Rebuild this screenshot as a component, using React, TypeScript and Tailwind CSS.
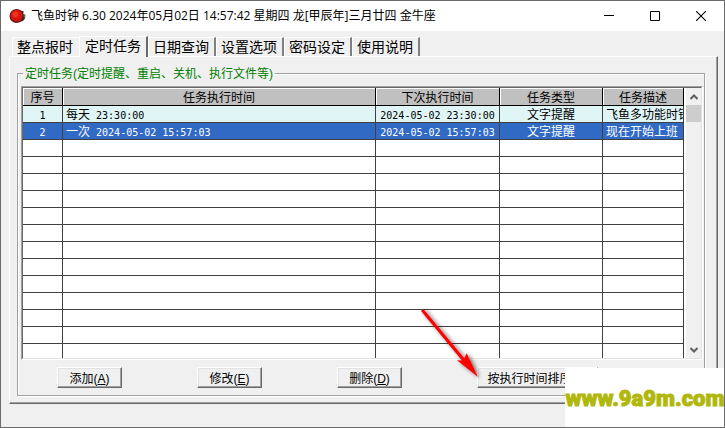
import { useState } from 'react';

const tabs = ['整点报时', '定时任务', '日期查询', '设置选项', '密码设定', '使用说明'];

const tasks = [
  { id: 1, repeat: '每天', time: '23:30:00', next: '2024-05-02 23:30:00', type: '文字提醒', desc: '飞鱼多功能时钟' },
  { id: 2, repeat: '一次', time: '2024-05-02 15:57:03', next: '2024-05-02 15:57:03', type: '文字提醒', desc: '现在开始上班' },
];

const emptyRows = Array.from({ length: 13 }, (_, i) => i);

const actions = [
  { label: '添加', hotkey: 'A' },
  { label: '修改', hotkey: 'E' },
  { label: '删除', hotkey: 'D' },
];

const raised =
  'h-[21px] shrink-0 border border-t-white border-l-white border-r-[#696969] border-b-[#696969] bg-[#f0f0f0] text-xs leading-4 whitespace-nowrap shadow-[inset_-1px_-1px_0_#a0a0a0,inset_1px_1px_0_#e3e3e3]';

const headCell =
  'h-[18px] border-r border-b border-black bg-[#c0c0c0] p-0 text-center text-xs leading-4 font-normal shadow-[inset_1px_1px_0_#fff]';

const cell = 'h-[17px] overflow-hidden border-r border-b border-[#404040] p-0 leading-4 whitespace-nowrap';

const Mono = ({ children }: { children: React.ReactNode }) => (
  <span className="font-['DejaVu_Sans_Mono',monospace] text-[10px] leading-none">{children}</span>
);

const Latin = ({ children }: { children: React.ReactNode }) => (
  <span className="font-['Liberation_Sans',sans-serif] leading-none">{children}</span>
);

const TitleBar = () => (
  <header className="flex h-[30px] shrink-0 items-center bg-white pl-2">
    <svg className="h-4 w-[17px] shrink-0" viewBox="0 0 17 16" aria-hidden="true">
      <path d="M10 2 L15 3.5 L14 5.5 L16.5 7 L16 10.5 L14 13 L10 14Z" fill="#2e3a2c" />
      <path d="M14.5 6L16 8L15 10Z" fill="#8a9480" />
      <circle cx="7.5" cy="8" r="7" fill="#6a1a14" />
      <circle cx="7.5" cy="7.7" r="5.9" fill="#d8160f" />
      <circle cx="6.4" cy="6.4" r="2.8" fill="#f2301f" />
    </svg>
    <h1 className="ml-[5px] flex-1 truncate font-['Open_Sans','Noto_Sans_CJK_SC',sans-serif] text-xs">
      飞鱼时钟 6.30 2024年05月02日 14:57:42 星期四 龙[甲辰年]三月廿四 金牛座
    </h1>
    <div className="flex h-full shrink-0">
      <button aria-label="最小化" className="flex w-[46px] items-center justify-center">
        <svg width="10" height="10" viewBox="0 0 10 10"><path d="M0 4.5H10" stroke="#000" /></svg>
      </button>
      <button aria-label="最大化" className="flex w-[46px] items-center justify-center">
        <svg width="10" height="10" viewBox="0 0 10 10"><path d="M.5 .5H9.5V9.5H.5Z" fill="none" stroke="#000" /></svg>
      </button>
      <button aria-label="关闭" className="flex w-[46px] items-center justify-center">
        <svg width="10" height="10" viewBox="0 0 10 10"><path d="M0 0L10 10M10 0L0 10" stroke="#000" strokeWidth="1.1" /></svg>
      </button>
    </div>
  </header>
);

const ScrollBar = () => (
  <div className="flex w-[17px] shrink-0 flex-col border-l-2 border-white bg-[#f0f0f0]">
    <button aria-label="向上滚动" className="flex h-[17px] items-center justify-center">
      <svg width="8" height="6" viewBox="0 0 8 6"><path d="M.5 5L4 1.5L7.5 5" fill="none" stroke="#606060" strokeWidth="2" /></svg>
    </button>
    <div className="h-[17px] bg-[#cdcdcd]" />
    <button aria-label="向下滚动" className="mt-auto flex h-[17px] items-center justify-center">
      <svg width="8" height="6" viewBox="0 0 8 6"><path d="M.5 1L4 4.5L7.5 1" fill="none" stroke="#606060" strokeWidth="2" /></svg>
    </button>
  </div>
);

const TaskTable = ({ selected, onSelect }: { selected: number; onSelect: (id: number) => void }) => (
  <div className="mr-px ml-[3px] flex min-h-0 flex-1 border border-t-[#a0a0a0] border-l-[#a0a0a0] border-r-white border-b-white">
    <div className="flex min-w-0 flex-1 border border-t-[#696969] border-l-[#696969] border-r-[#e3e3e3] border-b-[#e3e3e3] bg-white">
      <div className="min-w-0 flex-1 overflow-hidden">
        <table className="w-full table-fixed border-separate border-spacing-0 text-xs leading-4">
          <colgroup>
            <col className="w-10" />
            <col />
            <col className="w-[124px]" />
            <col className="w-[103px]" />
            <col className="w-[81px]" />
          </colgroup>
          <thead>
            <tr>
              <th className={headCell}>序号</th>
              <th className={headCell}>任务执行时间</th>
              <th className={headCell}>下次执行时间</th>
              <th className={headCell}>任务类型</th>
              <th className={headCell}>任务描述</th>
            </tr>
          </thead>
          <tbody>
            {tasks.map((task) => (
              <tr
                key={task.id}
                onClick={() => onSelect(task.id)}
                className={task.id === selected ? 'bg-[#316ac5] text-white' : 'bg-[#e0f6f6]'}
              >
                <td className={`${cell} text-center`}><Mono>{task.id}</Mono></td>
                <td className={`${cell} pl-[3px]`}>{task.repeat}<Mono> {task.time}</Mono></td>
                <td className={`${cell} text-center`}><Mono>{task.next}</Mono></td>
                <td className={`${cell} text-center`}>{task.type}</td>
                <td className={`${cell} pl-[3px]`}>{task.desc}</td>
              </tr>
            ))}
            {emptyRows.map((row) => (
              <tr key={row}>
                <td className={cell} />
                <td className={cell} />
                <td className={cell} />
                <td className={cell} />
                <td className={cell} />
              </tr>
            ))}
          </tbody>
        </table>
      </div>
      <ScrollBar />
    </div>
  </div>
);

const App = () => {
  const [activeTab, setActiveTab] = useState(1);
  const [selected, setSelected] = useState(2);

  return (
    <div className="relative flex h-screen flex-col overflow-hidden border border-[#6b6b6b] bg-[#f0f0f0] font-['Noto_Sans_CJK_SC',sans-serif] text-black">
      <TitleBar />

      <main className="mr-1.5 mb-[23px] ml-2 flex min-h-0 flex-1 flex-col pt-[5px]">
        <div role="tablist" className="flex h-5 shrink-0 items-end pl-[3px]">
          {tabs.map((tab, index) => (
            <button
              key={tab}
              role="tab"
              aria-selected={index === activeTab}
              onClick={() => setActiveTab(index)}
              className={`shrink-0 border-t border-l border-white text-left text-sm leading-4 whitespace-nowrap ${
                index === activeTab
                  ? 'relative -mb-px -ml-px h-[21px] w-[69px] border-r-2 border-r-[#696969] bg-[#f0f0f0] pb-1 pl-[5px]'
                  : index === activeTab - 1
                    ? 'h-[19px] w-[68px] pb-0.5 pl-1'
                    : 'h-[19px] w-[68px] border-r-2 border-r-[#808080] pb-0.5 pl-1'
              }`}
            >
              {tab}
            </button>
          ))}
        </div>

        <section className="flex min-h-0 flex-1 flex-col border border-t-white border-l-white border-r-[#696969] border-b-[#696969] pt-2.5 pr-3 pb-[7px] pl-[7px] shadow-[inset_-1px_-1px_0_#a0a0a0]">
          <fieldset className="flex min-h-0 min-w-0 flex-1 flex-col border border-[#a0a0a0] py-[7px] shadow-[inset_1px_1px_0_#fff,1px_1px_0_#fff]">
            <legend className="ml-[5px] h-3 bg-[#f0f0f0] px-0.5 text-xs leading-3 text-[#008000]">
              定时任务<Latin>(</Latin>定时提醒、重启、关机、执行文件等<Latin>)</Latin>
            </legend>

            <TaskTable selected={selected} onSelect={setSelected} />

            <div className="mt-[7px] flex shrink-0 gap-[75px] pl-[39px]">
              {actions.map((action) => (
                <button key={action.hotkey} className={`${raised} w-[65px]`}>
                  {action.label}<Latin>(<u>{action.hotkey}</u>)</Latin>
                </button>
              ))}
              <button className={`${raised} w-[121px]`}>按执行时间排序<Latin>(<u>S</u>)</Latin></button>
            </div>
          </fieldset>
        </section>
      </main>

      {/* Pointer to the sort button */}
      <svg className="pointer-events-none absolute bottom-[46px] left-[418px] h-[76px] w-[68px]" viewBox="0 0 68 76" aria-hidden="true">
        <defs>
          <filter id="arrow-shadow" x="-20%" y="-20%" width="140%" height="140%">
            <feDropShadow dx="2" dy="1" stdDeviation="2" floodColor="#000" floodOpacity="0.6" />
          </filter>
        </defs>
        <path
          d="M2 6 L4.4 4 L45.3 53.3 L47.7 48.3 L59 72 L38 55.2 L43 55.4 Z"
          fill="#f00"
          filter="url(#arrow-shadow)"
        />
      </svg>

      {/* Site watermark */}
      <div className="absolute -right-px -bottom-px flex h-[60px] w-40 items-center justify-center bg-white">
        <a href="#" className="font-[Roboto,sans-serif] text-[22px] font-black text-[#b0b80c] [-webkit-text-stroke:1px_#b0b80c]">www.9a9m.com</a>
      </div>
    </div>
  );
};

export default App;
